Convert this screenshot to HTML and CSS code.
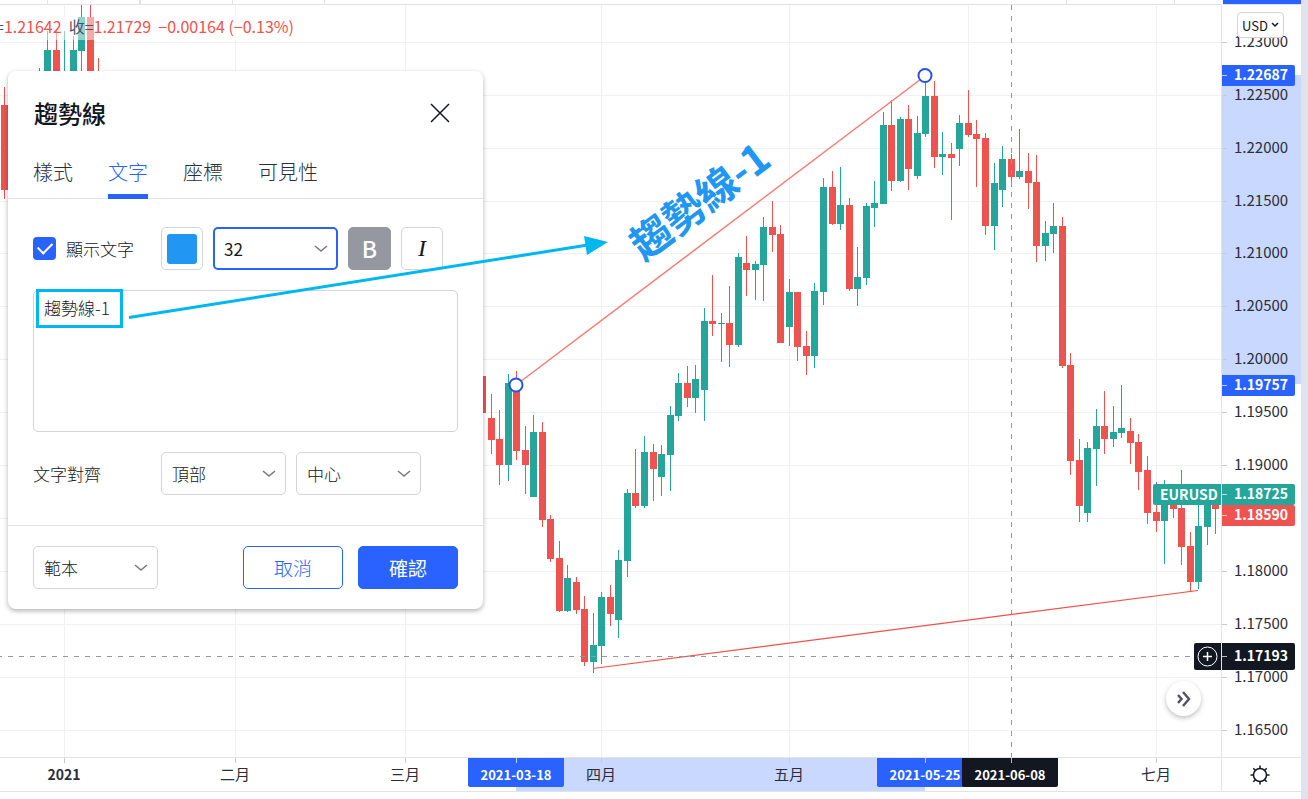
FILE: index.html
```html
<!DOCTYPE html>
<html lang="zh-Hant">
<head>
    <meta charset="UTF-8">
    <meta name="viewport" content="width=device-width, initial-scale=1.0">
    <title>EURUSD</title>
    <link rel="stylesheet" href="styles.css">
</head>
<body>
    <div class="layout">
        <div class="topbar">
            <svg width="100%" height="5">
                <path d="M47.5 0v4M232.5 0v4M324.5 0v4M1066.5 0v4M1174.5 0v4" stroke="#e0e3eb"/>
                <path d="M140 0v4" stroke="#e0e3eb" stroke-width="2"/>
            </svg>
        </div>
        <div class="topbar topbar-active"></div>
        <div class="side"></div>

        <main class="pane">
            <svg id="chart" class="plot"></svg>
            <div class="legend">
                <span>=<b>1.21642</b></span>
                <span>收=<b>1.21729</b></span>
                <span><b>−0.00164 (−0.13%)</b></span>
            </div>
            <button class="scroll-btn" aria-label="捲動至最新">
                <svg width="16" height="16" viewBox="0 0 16 16" fill="none" stroke="#50535e" stroke-width="2.4"><path d="M2 4l3.500 4L2 12M7 1l6 7-6 7"/></svg>
            </button>
        </main>
        <div class="price-axis">
            <svg id="prices" class="plot"></svg>
            <button class="currency">USD
                <svg width="8" height="6" viewBox="0 0 8 6" fill="none" stroke="#131722" stroke-width="1.5"><path d="M1 1l3 3 3-3"/></svg>
            </button>
        </div>

        <div class="time-axis"><svg id="times" class="plot"></svg></div>
        <div class="corner">
            <button class="gear" aria-label="設定">
                <svg width="20" height="20" viewBox="0 0 20 20" fill="none" stroke="#131722" stroke-width="1.5">
                    <circle cx="10" cy="10" r="6.5"/>
                    <path d="M10 .5v3M10 16.5v3M.5 10h3M16.500 10h3M3.300 3.300l2 2M14.700 14.700l2 2M3.300 16.700l2-2M14.700 5.300l2-2"/>
                </svg>
            </button>
        </div>
    </div>

    <form class="dialog" onsubmit="return false">
        <header class="dialog-header">
            <h2>趨勢線</h2>
            <button type="button" class="close" aria-label="關閉">
                <svg width="20" height="20" viewBox="0 0 20 20" stroke="#131722" stroke-width="1.5"><path d="M1 1l18 18M19 1L1 19"/></svg>
            </button>
        </header>
        <nav class="tabs">
            <a href="#">樣式</a>
            <a href="#" class="active">文字</a>
            <a href="#">座標</a>
            <a href="#">可見性</a>
        </nav>

        <div class="dialog-body">
            <div class="row">
                <label class="row-label check-label"><input type="checkbox" class="check" checked>顯示文字</label>
                <button type="button" class="tool" aria-label="顏色"><span class="swatch"></span></button>
                <span class="select focused">
                    <select aria-label="字型大小"><option>32</option></select>
                    <svg width="14" height="8" viewBox="0 0 14 8"><path d="M1 1l6 5 6-5"/></svg>
                </span>
                <button type="button" class="tool bold">B</button>
                <button type="button" class="tool italic">I</button>
            </div>
            <textarea aria-label="文字">趨勢線-1</textarea>
            <div class="row">
                <label class="row-label" for="valign">文字對齊</label>
                <span class="select">
                    <select id="valign"><option>頂部</option></select>
                    <svg width="14" height="8" viewBox="0 0 14 8"><path d="M1 1l6 5 6-5"/></svg>
                </span>
                <span class="select">
                    <select aria-label="水平對齊"><option>中心</option></select>
                    <svg width="14" height="8" viewBox="0 0 14 8"><path d="M1 1l6 5 6-5"/></svg>
                </span>
            </div>
        </div>

        <footer class="dialog-footer">
            <span class="select">
                <select aria-label="範本"><option>範本</option></select>
                <svg width="14" height="8" viewBox="0 0 14 8"><path d="M1 1l6 5 6-5"/></svg>
            </span>
            <button type="button" class="btn">取消</button>
            <button type="submit" class="btn primary">確認</button>
        </footer>
    </form>

    <!-- Hand drawn marks over the dialog -->
    <svg class="marks" width="620" height="340">
        <rect x="37.5" y="290.5" width="84" height="36" fill="none" stroke="#00b7ef" stroke-width="3"/>
        <path d="M129 317.500L588 245" stroke="#00b7ef" stroke-width="3"/>
        <path d="M584 236L608 242L587 255Z" fill="#00b7ef"/>
    </svg>

    <script src="chart.js"></script>
</body>
</html>
```
FILE: styles.css
```css
* {
    box-sizing: border-box;
}

body {
    margin: 0;
    overflow: hidden;
    background: #fff;
    color: #131722;
    font-family: "Noto Sans CJK TC", "Noto Sans", sans-serif;
    font-size: 17px;
}

button,
select,
textarea {
    font: inherit;
    color: inherit;
}

button {
    padding: 0;
    background: #fff;
    cursor: pointer;
}

.layout {
    display: grid;
    grid-template-columns: 1fr 80px 7px;
    grid-template-rows: 5px 1fr 35px 7px;
    height: 100vh;
}

.topbar {
    border-bottom: 1px solid #e0e3eb;
    overflow: hidden;
}

.topbar svg {
    display: block;
}

.topbar-active {
    background: #2962ff;
    margin-left: 2px;
}

.side {
    grid-column: 3;
    grid-row: 1 / 5;
    background: #e0e3eb;
}

.pane,
.price-axis {
    position: relative;
    min-height: 0;
}

.plot {
    display: block;
    width: 100%;
    height: 100%;
}

.price-axis {
    border-left: 1px solid #e0e3eb;
}

.time-axis,
.corner {
    border-top: 1px solid #e0e3eb;
    border-bottom: 1px solid #e0e3eb;
}

.corner {
    display: flex;
    align-items: center;
    justify-content: center;
    padding-right: 3px;
    border-left: 1px solid #e0e3eb;
}

.gear {
    display: flex;
    border: none;
}

/* Chart text */
.plot text {
    font-size: 15px;
    fill: #2a2e39;
}

.plot .tag,
.plot .year {
    font-family: "Noto Sans CJK TC", sans-serif;
    font-size: 14px;
    font-weight: 600;
}

.plot .tag {
    fill: #fff;
}

.plot .mid {
    text-anchor: middle;
}

.plot .date {
    font-size: 13px;
}

.plot .trend-text {
    font-size: 41px;
    font-weight: 700;
    fill: #2196f3;
}

.legend {
    position: absolute;
    top: 12px;
    left: -5px;
    display: flex;
    gap: 7px;
    padding-right: 4px;
    background: rgba(255, 255, 255, 0.5);
    color: #50535e;
    font-size: 16px;
    line-height: 19px;
    padding-bottom: 4px;
}

.legend b {
    color: #ef5350;
    font-weight: 400;
}

.scroll-btn {
    position: absolute;
    right: 20px;
    bottom: 41px;
    display: flex;
    align-items: center;
    justify-content: center;
    width: 35px;
    height: 35px;
    border: none;
    border-radius: 50%;
    box-shadow: 0 2px 5px rgba(0, 0, 0, 0.25);
}

.currency {
    position: absolute;
    top: 7px;
    left: 15px;
    display: flex;
    align-items: center;
    justify-content: center;
    gap: 3px;
    width: 47px;
    height: 26px;
    border: 1px solid #d1d4dc;
    border-radius: 4px;
    font-size: 13px;
}

/* Dialog */
.dialog {
    position: absolute;
    top: 71px;
    left: 8px;
    width: 475px;
    margin: 0;
    background: #fff;
    border-radius: 8px;
    box-shadow: 0 2px 5px rgba(0, 0, 0, 0.3);
}

.dialog-header {
    display: flex;
    align-items: center;
    justify-content: space-between;
    padding: 24px 33px 0 26px;
}

.dialog-header h2 {
    margin: 0;
    font-size: 24px;
    font-weight: 500;
    line-height: 36px;
}

.close {
    display: flex;
    border: none;
}

.tabs {
    display: flex;
    gap: 35px;
    padding: 24px 25px 0;
    border-bottom: 1px solid #e0e3eb;
}

.tabs a {
    padding-bottom: 5px;
    border-bottom: 5px solid transparent;
    margin-bottom: -1px;
    color: #2a2e39;
    font-size: 20px;
    font-weight: 300;
    line-height: 34px;
    text-decoration: none;
}

.tabs .active {
    border-color: #2962ff;
    color: #2962ff;
}

.dialog-body {
    display: grid;
    gap: 20px;
    padding: 28px 25px 30px;
}

.row {
    display: flex;
    align-items: center;
    gap: 10px;
}

.row-label {
    display: flex;
    align-items: center;
    width: 118px;
    font-weight: 300;
    white-space: nowrap;
}

.check-label {
    gap: 10px;
}

.check {
    appearance: none;
    width: 23px;
    height: 23px;
    margin: 0;
    display: grid;
    place-items: center;
    background: #2962ff;
    border-radius: 4px;
}

.check:checked::before {
    content: "";
    width: 12px;
    height: 7px;
    margin-top: -4px;
    border: solid #fff;
    border-width: 0 0 2px 2px;
    transform: rotate(-45deg);
}

.tool {
    display: flex;
    align-items: center;
    justify-content: center;
    width: 42px;
    height: 43px;
    border: 1px solid #d1d4dc;
    border-radius: 5px;
    font-size: 24px;
}

.swatch {
    width: 30px;
    height: 30px;
    background: #2196f3;
    border-radius: 3px;
}

.tool.bold {
    width: 43px;
    background: #9598a1;
    border-color: #9598a1;
    color: #fff;
    font-size: 23px;
    font-weight: 500;
    line-height: 24px;
    padding-bottom: 2px;
}

.tool.italic {
    font-family: "Liberation Serif", serif;
    font-style: italic;
}

.select {
    position: relative;
    display: flex;
    width: 125px;
}

.select select {
    appearance: none;
    width: 100%;
    height: 43px;
    padding: 0 10px;
    border: 1px solid #d1d4dc;
    border-radius: 5px;
    background: #fff;
    font-weight: 300;
}

.select.focused select {
    padding: 0 9px;
    border: 2px solid #2962ff;
    font-weight: 400;
}

.select svg {
    position: absolute;
    right: 10px;
    top: 18px;
    fill: none;
    stroke: #787b86;
    stroke-width: 1.6;
    pointer-events: none;
}

textarea {
    display: block;
    width: 100%;
    height: 142px;
    padding: 4px 10px;
    border: 1px solid #d1d4dc;
    border-radius: 5px;
    font-weight: 300;
    resize: none;
}

.dialog-footer {
    display: flex;
    gap: 15px;
    padding: 20px 25px;
    border-top: 1px solid #e0e3eb;
}

.dialog-footer .select {
    margin-right: auto;
}

.btn {
    width: 100px;
    height: 43px;
    border: 1px solid #2962ff;
    border-radius: 5px;
    color: #2962ff;
    font-size: 19px;
    font-weight: 300;
}

.btn.primary {
    background: #2962ff;
    color: #fff;
    font-weight: 400;
}

.marks {
    position: absolute;
    top: 0;
    left: 0;
    pointer-events: none;
}
```
FILE: chart.js
```js
// [x, high, body top, body bottom, low, up]
const candles = [
    [4, 87, 105, 190, 199, 0], [39, 68, 80, 100, 120, 1], [47, 31, 50, 90, 110, 1],
    [56, 31, 50, 90, 110, 0], [64, 31, 75, 90, 110, 1], [73, 36, 50, 90, 110, 1],
    [81, 5, 17, 51, 100, 1], [90, 5, 17, 90, 110, 0], [98, 58, 80, 100, 120, 0],
    [482, 376, 376, 413, 413, 0], [491, 394, 418, 440, 454, 0], [499, 410, 439, 465, 485, 0],
    [508, 374, 383, 465, 481, 1], [516, 371, 385, 451, 460, 0], [525, 426, 450, 465, 494, 0],
    [533, 415, 432, 497, 497, 1], [542, 422, 432, 520, 527, 0], [550, 515, 519, 559, 562, 0],
    [559, 541, 558, 611, 612, 0], [567, 565, 578, 611, 612, 1], [576, 577, 582, 610, 614, 0],
    [584, 596, 609, 662, 666, 0], [593, 613, 645, 662, 673, 1], [601, 592, 597, 646, 664, 1],
    [610, 585, 597, 614, 626, 0], [618, 550, 560, 620, 638, 1], [627, 489, 493, 561, 577, 1],
    [635, 449, 493, 506, 508, 0], [644, 436, 452, 506, 508, 1], [653, 444, 452, 469, 501, 0],
    [661, 445, 454, 477, 496, 1], [670, 406, 415, 455, 491, 1], [678, 373, 383, 416, 421, 1],
    [687, 366, 383, 398, 407, 0], [695, 365, 379, 398, 413, 1], [704, 308, 321, 390, 421, 1],
    [712, 275, 321, 324, 336, 0], [721, 313, 323, 324, 362, 1], [729, 286, 323, 345, 367, 0],
    [738, 253, 257, 345, 347, 1], [746, 236, 263, 270, 296, 0], [755, 261, 264, 270, 300, 1],
    [763, 217, 227, 265, 301, 1], [772, 201, 227, 235, 252, 0], [780, 225, 234, 343, 343, 0],
    [789, 279, 292, 327, 346, 1], [797, 292, 292, 347, 361, 0], [806, 331, 346, 356, 375, 0],
    [814, 283, 291, 356, 368, 1], [823, 178, 187, 292, 305, 1], [832, 171, 187, 224, 225, 0],
    [840, 167, 205, 224, 230, 1], [849, 198, 205, 289, 291, 0], [857, 247, 277, 289, 306, 1],
    [866, 203, 206, 278, 285, 1], [874, 181, 203, 208, 227, 1], [883, 112, 125, 204, 204, 1],
    [891, 100, 125, 181, 191, 0], [900, 117, 119, 181, 182, 1], [908, 105, 119, 169, 190, 0],
    [917, 116, 133, 176, 179, 1], [925, 76, 96, 134, 137, 1], [934, 81, 96, 157, 168, 0],
    [942, 132, 154, 157, 175, 1], [951, 143, 154, 158, 220, 0], [959, 115, 123, 149, 166, 1],
    [968, 90, 123, 135, 137, 0], [976, 120, 134, 139, 187, 0], [985, 133, 138, 226, 235, 0],
    [994, 163, 183, 226, 250, 1], [1002, 146, 159, 190, 207, 1], [1011, 154, 159, 177, 187, 0],
    [1019, 129, 171, 177, 179, 1], [1028, 153, 171, 183, 209, 0], [1036, 155, 182, 246, 262, 0],
    [1045, 221, 233, 246, 261, 1], [1053, 203, 226, 234, 253, 1], [1062, 217, 226, 366, 368, 0],
    [1070, 353, 365, 461, 475, 0], [1079, 439, 460, 506, 522, 0], [1087, 442, 448, 513, 522, 1],
    [1096, 409, 426, 449, 486, 1], [1104, 391, 426, 439, 454, 0], [1113, 406, 432, 439, 447, 1],
    [1121, 385, 428, 433, 438, 1], [1130, 418, 431, 443, 464, 0], [1138, 434, 442, 472, 490, 0],
    [1147, 456, 470, 513, 524, 0], [1156, 482, 512, 521, 532, 0], [1164, 480, 490, 521, 564, 1],
    [1173, 490, 500, 509, 518, 0], [1181, 470, 508, 547, 565, 0], [1190, 532, 546, 582, 592, 0],
    [1198, 500, 526, 582, 589, 1], [1207, 485, 490, 527, 545, 1], [1215, 490, 495, 509, 534, 0]
];

const levels = [
    [42, "1.23000"], [95, "1.22500"], [148, "1.22000"], [201, "1.21500"], [253, "1.21000"],
    [306, "1.20500"], [359, "1.20000"], [412, "1.19500"], [465, "1.19000"], [518, ""],
    [571, "1.18000"], [624, "1.17500"], [677, "1.17000"], [730, "1.16500"]
];

const months = [
    [64, "2021"], [235, "二月"], [405, "三月"], [601, "四月"], [789, "五月"], [968, ""], [1156, "七月"]
];

const rect = (x, y, w, h, fill, extra = "") =>
    `<rect x="${x}" y="${y}" width="${w}" height="${h}" fill="${fill}" ${extra}/>`;

// Main pane, top edge at y = 5
let out = "";
levels.forEach(([y]) => out += rect(0, y, "100%", 1, "#f0f1f3"));
months.forEach(([x]) => out += rect(x, 5, 1, "100%", "#f0f1f3"));
candles.forEach(([x, high, top, bottom, low, up]) => {
    const color = up ? "#26a69a" : "#ef5350";
    out += rect(x, high, 1, low - high, color) + rect(x - 3, top, 7, bottom - top, color);
});
out += `
    <path d="M516 385L925 76" stroke="#f77c73" stroke-width="1.5"/>
    <path d="M593 668.500L1198 590.500" stroke="#f05048" stroke-width="1.2"/>
    <path d="M1011.500 5V757M-3 656.500H1221" stroke="#9598a1" stroke-dasharray="5 6"/>
    <circle cx="516" cy="385" r="6.5" fill="#fff" stroke="#2454e0" stroke-width="2"/>
    <circle cx="925" cy="75.5" r="6.5" fill="#fff" stroke="#2454e0" stroke-width="2"/>
    <text class="trend-text" transform="translate(644 262) rotate(-37)">趨勢線-1</text>
    ${rect(1153, 484, 80, 21, "#26a69a", 'rx="2"')}
    <text class="tag" x="1160" y="500">EURUSD</text>
    ${rect(1194, 643, 40, 27, "#131722", 'rx="2"')}
    <circle cx="1207.5" cy="656.5" r="9.5" fill="none" stroke="#fff"/>
    <path d="M1203 656.500h9M1207.500 652v9" stroke="#fff" stroke-width="1.5"/>`;
document.getElementById("chart").innerHTML = `<g transform="translate(0 -5)">${out}</g>`;

// Price axis
const priceTags = [
    [65, 21, "#2962ff", "1.22687"], [375, 21, "#2962ff", "1.19757"], [484, 21, "#26a69a", "1.18725"],
    [505, 21, "#ef5350", "1.18590"], [643, 27, "#131722", "1.17193"]
];
out = rect(0, 75, "100%", 309, "#c9d8ff");
levels.forEach(([y, label]) => {
    out += rect(0, y, 5, 1, "#c8cbd3") + `<text x="12" y="${y + 5}">${label}</text>`;
});
priceTags.forEach(([y, h, color, label]) => {
    const mid = y + Math.floor(h / 2);
    out += rect(-3, y, 76, h, color, 'rx="2"') + rect(0, mid, 5, 1, "#ffffffb0") +
        `<text class="tag" x="12" y="${mid + 5}">${label}</text>`;
});
document.getElementById("prices").innerHTML = `<g transform="translate(0 -5)">${out}</g>`;

// Time axis
const dateTags = [
    [468, 516, "#2962ff", "2021-03-18"], [877, 925, "#2962ff", "2021-05-25"], [962, 1011, "#131722", "2021-06-08"]
];
out = rect(516, 0, 409, 33, "#c9d8ff");
months.forEach(([x, label]) => {
    out += rect(x, 0, 1, 5, "#c8cbd3") +
        `<text class="mid ${label === "2021" ? "year" : ""}" x="${x}" y="22">${label}</text>`;
});
dateTags.forEach(([x, tick, color, label]) => {
    out += rect(x, -3, 96, 32, color, 'rx="2"') + rect(tick, 0, 1, 5, "#ffffffb0") +
        `<text class="tag mid date" x="${x + 48}" y="22">${label}</text>`;
});
document.getElementById("times").innerHTML = out;
```
